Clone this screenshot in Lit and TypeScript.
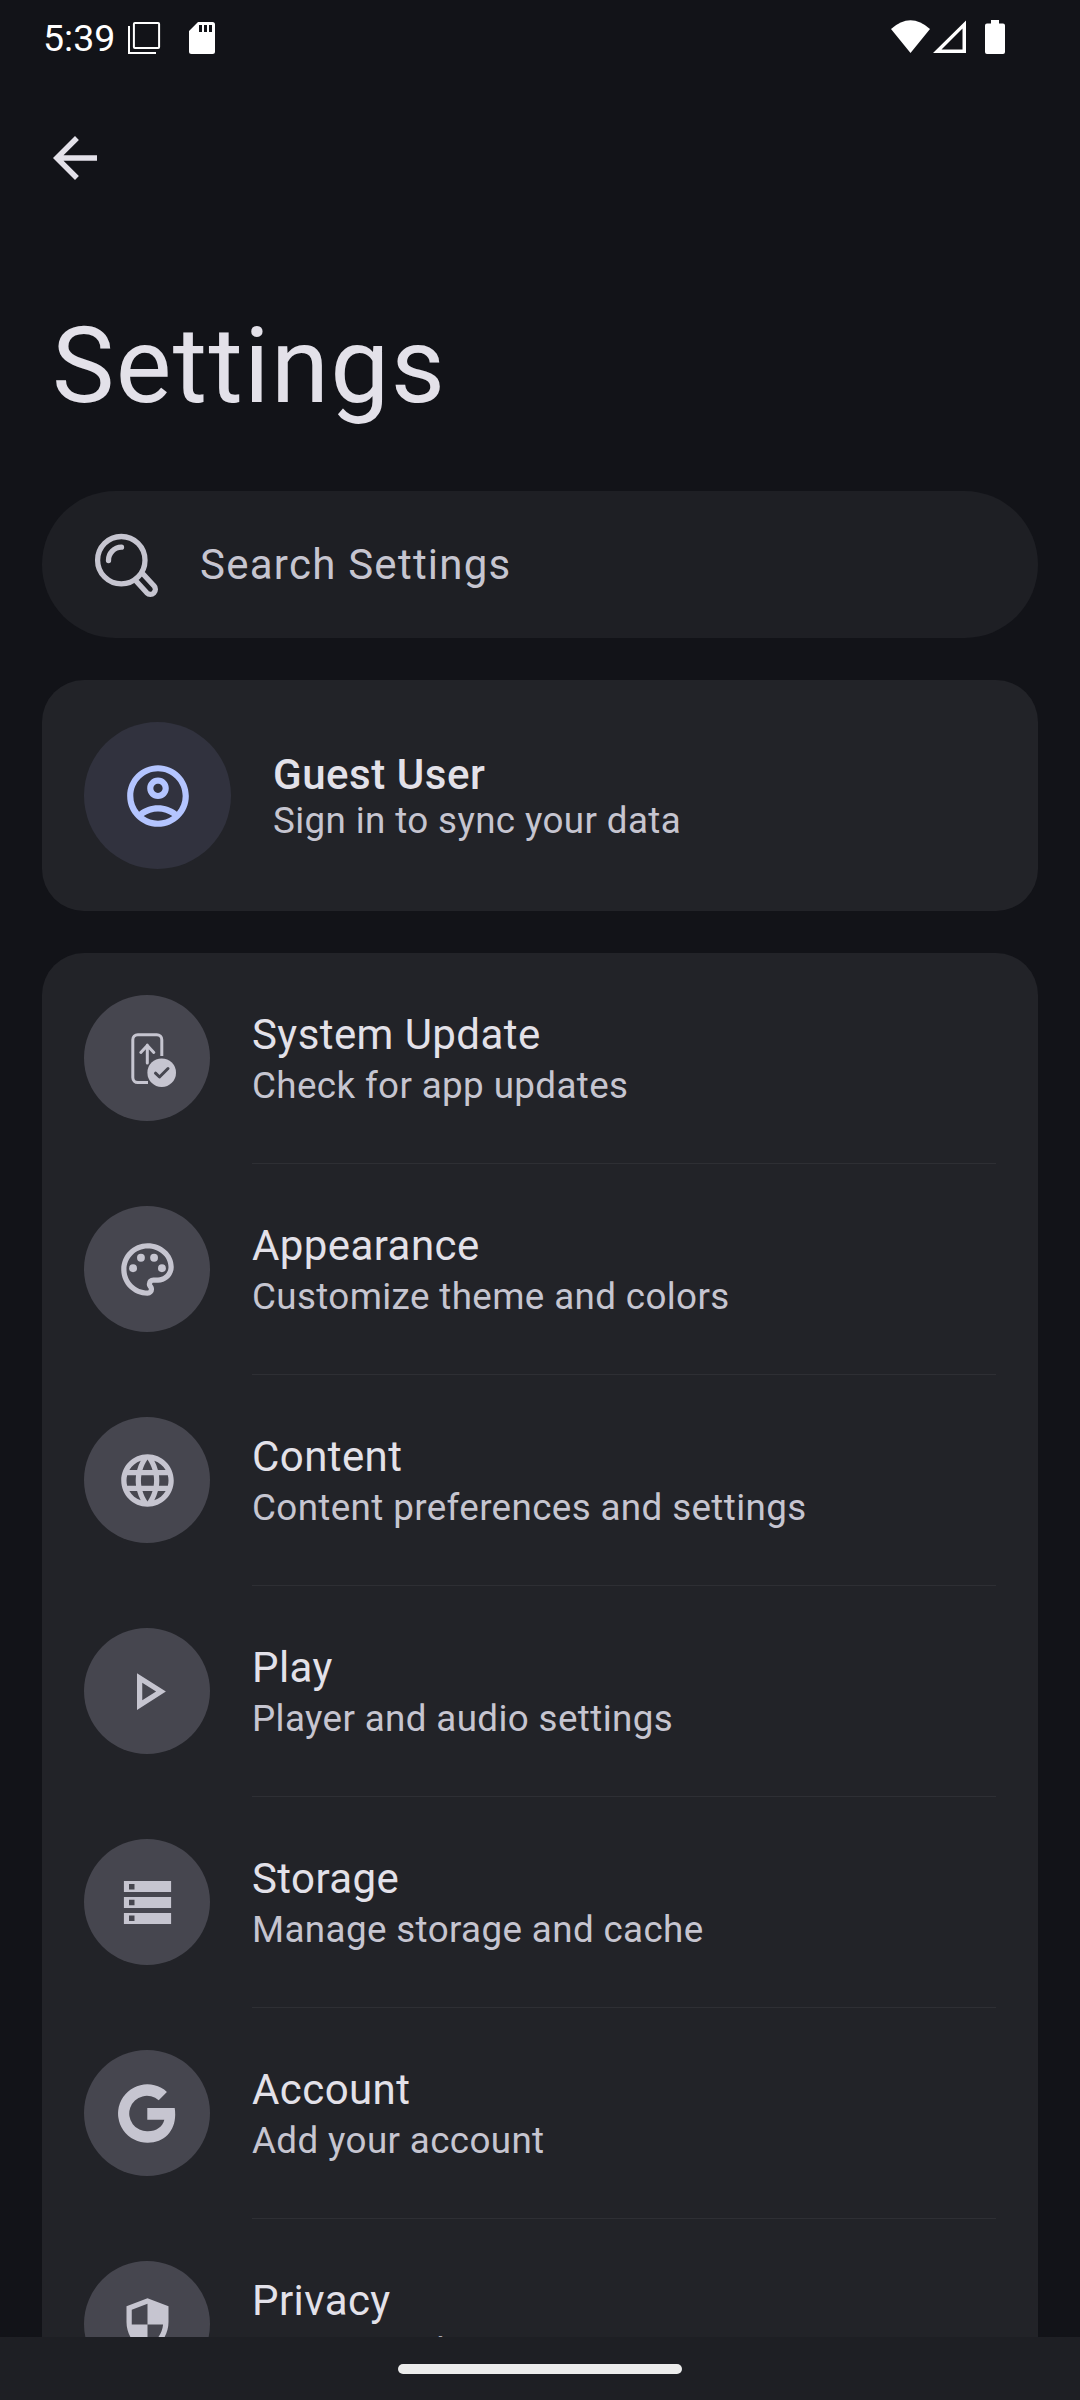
import { LitElement, html, css, svg } from "lit";
import { customElement } from "lit/decorators.js";

const icons = {
  update: svg`<g fill="none" stroke="#c6c5d0" stroke-width="3" stroke-linecap="round" stroke-linejoin="round">
      <path stroke-linecap="butt" d="M45.800 29V12.700a5 5 0 0 0-5-5H21.800a5 5 0 0 0-5 5V50.600a5 5 0 0 0 5 5H32"/>
      <path d="M31.300 36V18M24.800 25.500L31.300 18.500l6.500 7"/></g>
      <circle cx="45.700" cy="45.700" r="14.300" fill="#c6c5d0"/>
      <path d="M39.500 46.200l4 3.800L52 41.500" fill="none" stroke="#46464f" stroke-width="3" stroke-linecap="round" stroke-linejoin="round"/>`,
  palette: svg`<g fill="#c6c5d0" transform="scale(2.625)"><path d="M12 22C6.490 22 2 17.510 2 12S6.490 2 12 2s10 4.040 10 9c0 3.310-2.690 6-6 6h-1.770c-.28 0-.5.220-.5.500 0 .120.050.230.130.330.410.470.640 1.060.640 1.670A2.500 2.500 0 0 1 12 22zm0-18c-4.410 0-8 3.590-8 8s3.590 8 8 8c.280 0 .5-.220.500-.5a.54.54 0 0 0-.14-.35c-.41-.46-.63-1.050-.63-1.650a2.500 2.500 0 0 1 2.500-2.500H16c2.210 0 4-1.790 4-4 0-3.860-3.590-7-8-7z"/><circle cx="6.500" cy="11.500" r="1.500"/><circle cx="9.500" cy="7.500" r="1.500"/><circle cx="14.500" cy="7.500" r="1.500"/><circle cx="17.500" cy="11.500" r="1.500"/></g>`,
  globe: svg`<path fill="#c6c5d0" transform="scale(2.625)" d="M11.99 2C6.47 2 2 6.48 2 12s4.47 10 9.99 10C17.52 22 22 17.52 22 12S17.52 2 11.99 2zm6.93 6h-2.95c-.32-1.25-.78-2.45-1.38-3.56 1.84.63 3.37 1.91 4.33 3.56zM12 4.04c.83 1.2 1.48 2.53 1.91 3.96h-3.82c.43-1.43 1.08-2.76 1.91-3.96zM4.26 14C4.1 13.36 4 12.69 4 12s.1-1.36.26-2h3.38c-.08.66-.14 1.32-.14 2 0 .68.06 1.34.14 2H4.26zm.82 2h2.95c.32 1.25.78 2.45 1.38 3.56-1.84-.63-3.37-1.9-4.33-3.56zm2.95-8H5.08c.96-1.66 2.49-2.93 4.33-3.56C8.81 5.55 8.35 6.75 8.03 8zM12 19.96c-.83-1.2-1.48-2.53-1.91-3.96h3.82c-.43 1.43-1.08 2.76-1.91 3.96zM14.34 14H9.66c-.09-.66-.16-1.32-.16-2 0-.68.07-1.35.16-2h4.68c.09.65.16 1.32.16 2 0 .68-.07 1.34-.16 2zm.25 5.56c.6-1.11 1.06-2.31 1.38-3.56h2.95c-.96 1.65-2.49 2.93-4.33 3.56zM16.36 14c.08-.66.14-1.32.14-2 0-.68-.06-1.34-.14-2h3.38c.16.64.26 1.31.26 2s-.1 1.36-.26 2h-3.38z"/>`,
  play: svg`<path fill="#c6c5d0" transform="scale(2.625)" d="M10 8.640L15.270 12 10 15.360V8.640M8 5v14l11-7L8 5z"/>`,
  storage: svg`<path fill="#c6c5d0" fill-rule="evenodd" d="M7.900 10.100H55.100V21H7.900zM13 13v5.500h5.500V13zM7.900 26H55.100V37H7.900zM13 28.800v5.500h5.500v-5.500zM7.900 42H55.100V52.900H7.900zM13 44.500v5.500h5.500v-5.500z"/>`,
  google: svg`<path fill="#c6c5d0" d="M50.900 9.900A29.200 29.200 0 1 0 31.900 60.700C48 60.700 59.200 49.400 59.200 32.500Q59.200 29 58.700 26H31.300V37.700H48.300C46.700 44.500 40.500 49.200 31.900 49.200A17.700 17.700 0 1 1 42.700 18.300z"/>`,
  shield: svg`<path fill="#c6c5d0" fill-rule="evenodd" transform="scale(2.625)" d="M12 2L4 5v6.090c0 5.050 3.410 9.760 8 10.910 4.590-1.150 8-5.860 8-10.910V5l-8-3zM12 4.140V12h5.940c-.4 3.800-2.900 7-5.940 7.930V12H6V6.390z"/>`,
};

const rows = [
  { icon: icons.update, title: "System Update", text: "Check for app updates" },
  { icon: icons.palette, title: "Appearance", text: "Customize theme and colors" },
  { icon: icons.globe, title: "Content", text: "Content preferences and settings" },
  { icon: icons.play, title: "Play", text: "Player and audio settings" },
  { icon: icons.storage, title: "Storage", text: "Manage storage and cache" },
  { icon: icons.google, title: "Account", text: "Add your account" },
  { icon: icons.shield, title: "Privacy", text: "Privacy and security" },
];

@customElement("app-root")
export class AppRoot extends LitElement {
  static styles = css`
    :host { display: flex; flex-direction: column; width: 1080px; height: 2400px; overflow: hidden; background: #121318; color: #e3e1e9; font-family: Roboto, sans-serif; }
    svg { display: block; flex: none; }
    .status { display: flex; height: 74px; flex: none; }
    .time { margin-left: 43px; width: 84px; font-size: 37.500px; line-height: 76px; color: #fff; }
    .left-icons { width: 100px; height: 74px; }
    .right-icons { margin-left: auto; margin-right: 70px; }
    .bar { height: 168px; padding: 51px 0 0 42px; box-sizing: border-box; flex: none; }
    h1 { margin: 0; padding: 61px 0 0 52px; height: 249px; box-sizing: border-box; flex: none; font-size: 105px; line-height: 128px; font-weight: 400; letter-spacing: 1.350px; }
    main { flex: 1; min-height: 0; overflow: hidden; display: flex; flex-direction: column; gap: 42px; padding: 0 42px; }
    .search { height: 147px; flex: none; border-radius: 74px; background: #1e1f24; display: flex; align-items: center; padding-left: 42px; font-size: 42px; letter-spacing: 1.250px; color: #c6c5d0; }
    .search svg { margin-right: 32px; }
    .card { background: #222328; border-radius: 42px; flex: none; }
    .profile { height: 231px; display: flex; align-items: center; gap: 42px; padding-left: 42px; box-sizing: border-box; }
    .avatar { width: 147px; height: 147px; border-radius: 50%; background: #31323e; display: grid; place-items: center; box-sizing: border-box; padding: 1px 0 0 1px; }
    .row { display: flex; align-items: center; height: 210px; padding: 0 42px; gap: 42px; }
    .disc { width: 126px; height: 126px; flex: none; box-sizing: border-box; padding: 32px; border-radius: 50%; background: #46464f; }
    .line { height: 1px; margin: 0 42px 0 210px; background: #2e2f34; }
    .title { font-size: 42px; line-height: 51px; letter-spacing: 0.420px; white-space: nowrap; }
    .profile .title { font-weight: 500; line-height: 49px; letter-spacing: 0.550px; }
    .text { font-size: 36.750px; line-height: 43px; letter-spacing: 0.380px; color: #c6c5d0; white-space: nowrap; }
    .row .text { margin-top: 4px; }
    .nav { height: 63px; flex: none; background: #1e1f24; display: grid; place-items: center; }
    .pill { width: 284px; height: 10px; border-radius: 5px; background: #ececec; }
  `;

  render() {
    return html`
      <div class="status">
        <div class="time">5:39</div>
        <svg class="left-icons" width="100" height="74" viewBox="127 0 100 74">
          <rect x="133.900" y="22.900" width="25.200" height="25.200" rx="1" fill="none" stroke="#fff" stroke-width="2"/>
          <path d="M129 26v27h27" fill="none" stroke="#fff" stroke-width="2"/>
          <path fill="#fff" fill-rule="evenodd" d="M198 22h14.500q2.500 0 2.500 2.500v27q0 2.500-2.500 2.500h-21q-2.500 0-2.500-2.500V31zM199 25v7h3v-7zm5 0v7h3v-7zm5 0v7h3v-7z"/>
        </svg>
        <svg class="right-icons" width="126" height="74" viewBox="884 0 126 74">
          <path fill="#fff" d="M891 29Q910.500 11.500 930 29L910.500 53z"/>
          <path fill="#fff" fill-rule="evenodd" d="M933 53L966 20.500V53zM941.500 49.500H962.500V28.500z"/>
          <path fill="#fff" d="M991 20h8v3.500h4q2 0 2 2v26.500q0 2-2 2h-16q-2 0-2-2V25.500q0-2 2-2h4z"/>
        </svg>
      </div>
      <div class="bar">
        <svg width="66" height="66" viewBox="0 0 24 24"><path fill="#e3e1e9" d="M20 11H7.830l5.590-5.590L12 4l-8 8 8 8 1.410-1.410L7.830 13H20v-2z"/></svg>
      </div>
      <h1>Settings</h1>
      <main>
        <div class="search">
          <svg width="84" height="84" viewBox="84 522 84 84" fill="none" stroke="#c6c5d0" stroke-width="5.300" stroke-linecap="round" stroke-linejoin="round">
            <circle cx="121.300" cy="559.200" r="23.700"/>
            <path d="M108.500 559.500a13 13 0 0 1 13-13.300"/>
            <path d="M136.500 580.500L146.800 591.800a5 5 0 0 0 7.100-7.100L143.300 573.300"/>
          </svg>
          <span>Search Settings</span>
        </div>
        <div class="card profile">
          <div class="avatar">
            <svg width="74" height="74" viewBox="0 0 24 24" fill="#b4c5ff"><path d="M12 2C6.480 2 2 6.480 2 12s4.480 10 10 10 10-4.480 10-10S17.520 2 12 2zM7.350 18.500C8.660 17.560 10.260 17 12 17s3.340.56 4.650 1.500C15.340 19.440 13.740 20 12 20s-3.340-.56-4.650-1.500zm10.790-1.380C16.450 15.800 14.320 15 12 15s-4.450.8-6.140 2.120C4.700 15.730 4 13.950 4 12c0-4.420 3.580-8 8-8s8 3.580 8 8c0 1.950-.7 3.730-1.860 5.120z"/><path d="M12 6c-1.930 0-3.500 1.570-3.500 3.500S10.070 13 12 13s3.500-1.570 3.500-3.500S13.930 6 12 6zm0 5c-.83 0-1.500-.67-1.500-1.500S11.170 8 12 8s1.500.67 1.500 1.500S12.830 11 12 11z"/></svg>
          </div>
          <div><div class="title">Guest User</div><div class="text">Sign in to sync your data</div></div>
        </div>
        <div class="card">
          ${rows.map((r, i) => html`
            ${i ? html`<div class="line"></div>` : ""}
            <div class="row">
              <div class="disc"><svg width="63" height="63" viewBox="0 0 63 63">${r.icon}</svg></div>
              <div><div class="title">${r.title}</div><div class="text">${r.text}</div></div>
            </div>`)}
        </div>
      </main>
      <div class="nav"><div class="pill"></div></div>
    `;
  }
}
